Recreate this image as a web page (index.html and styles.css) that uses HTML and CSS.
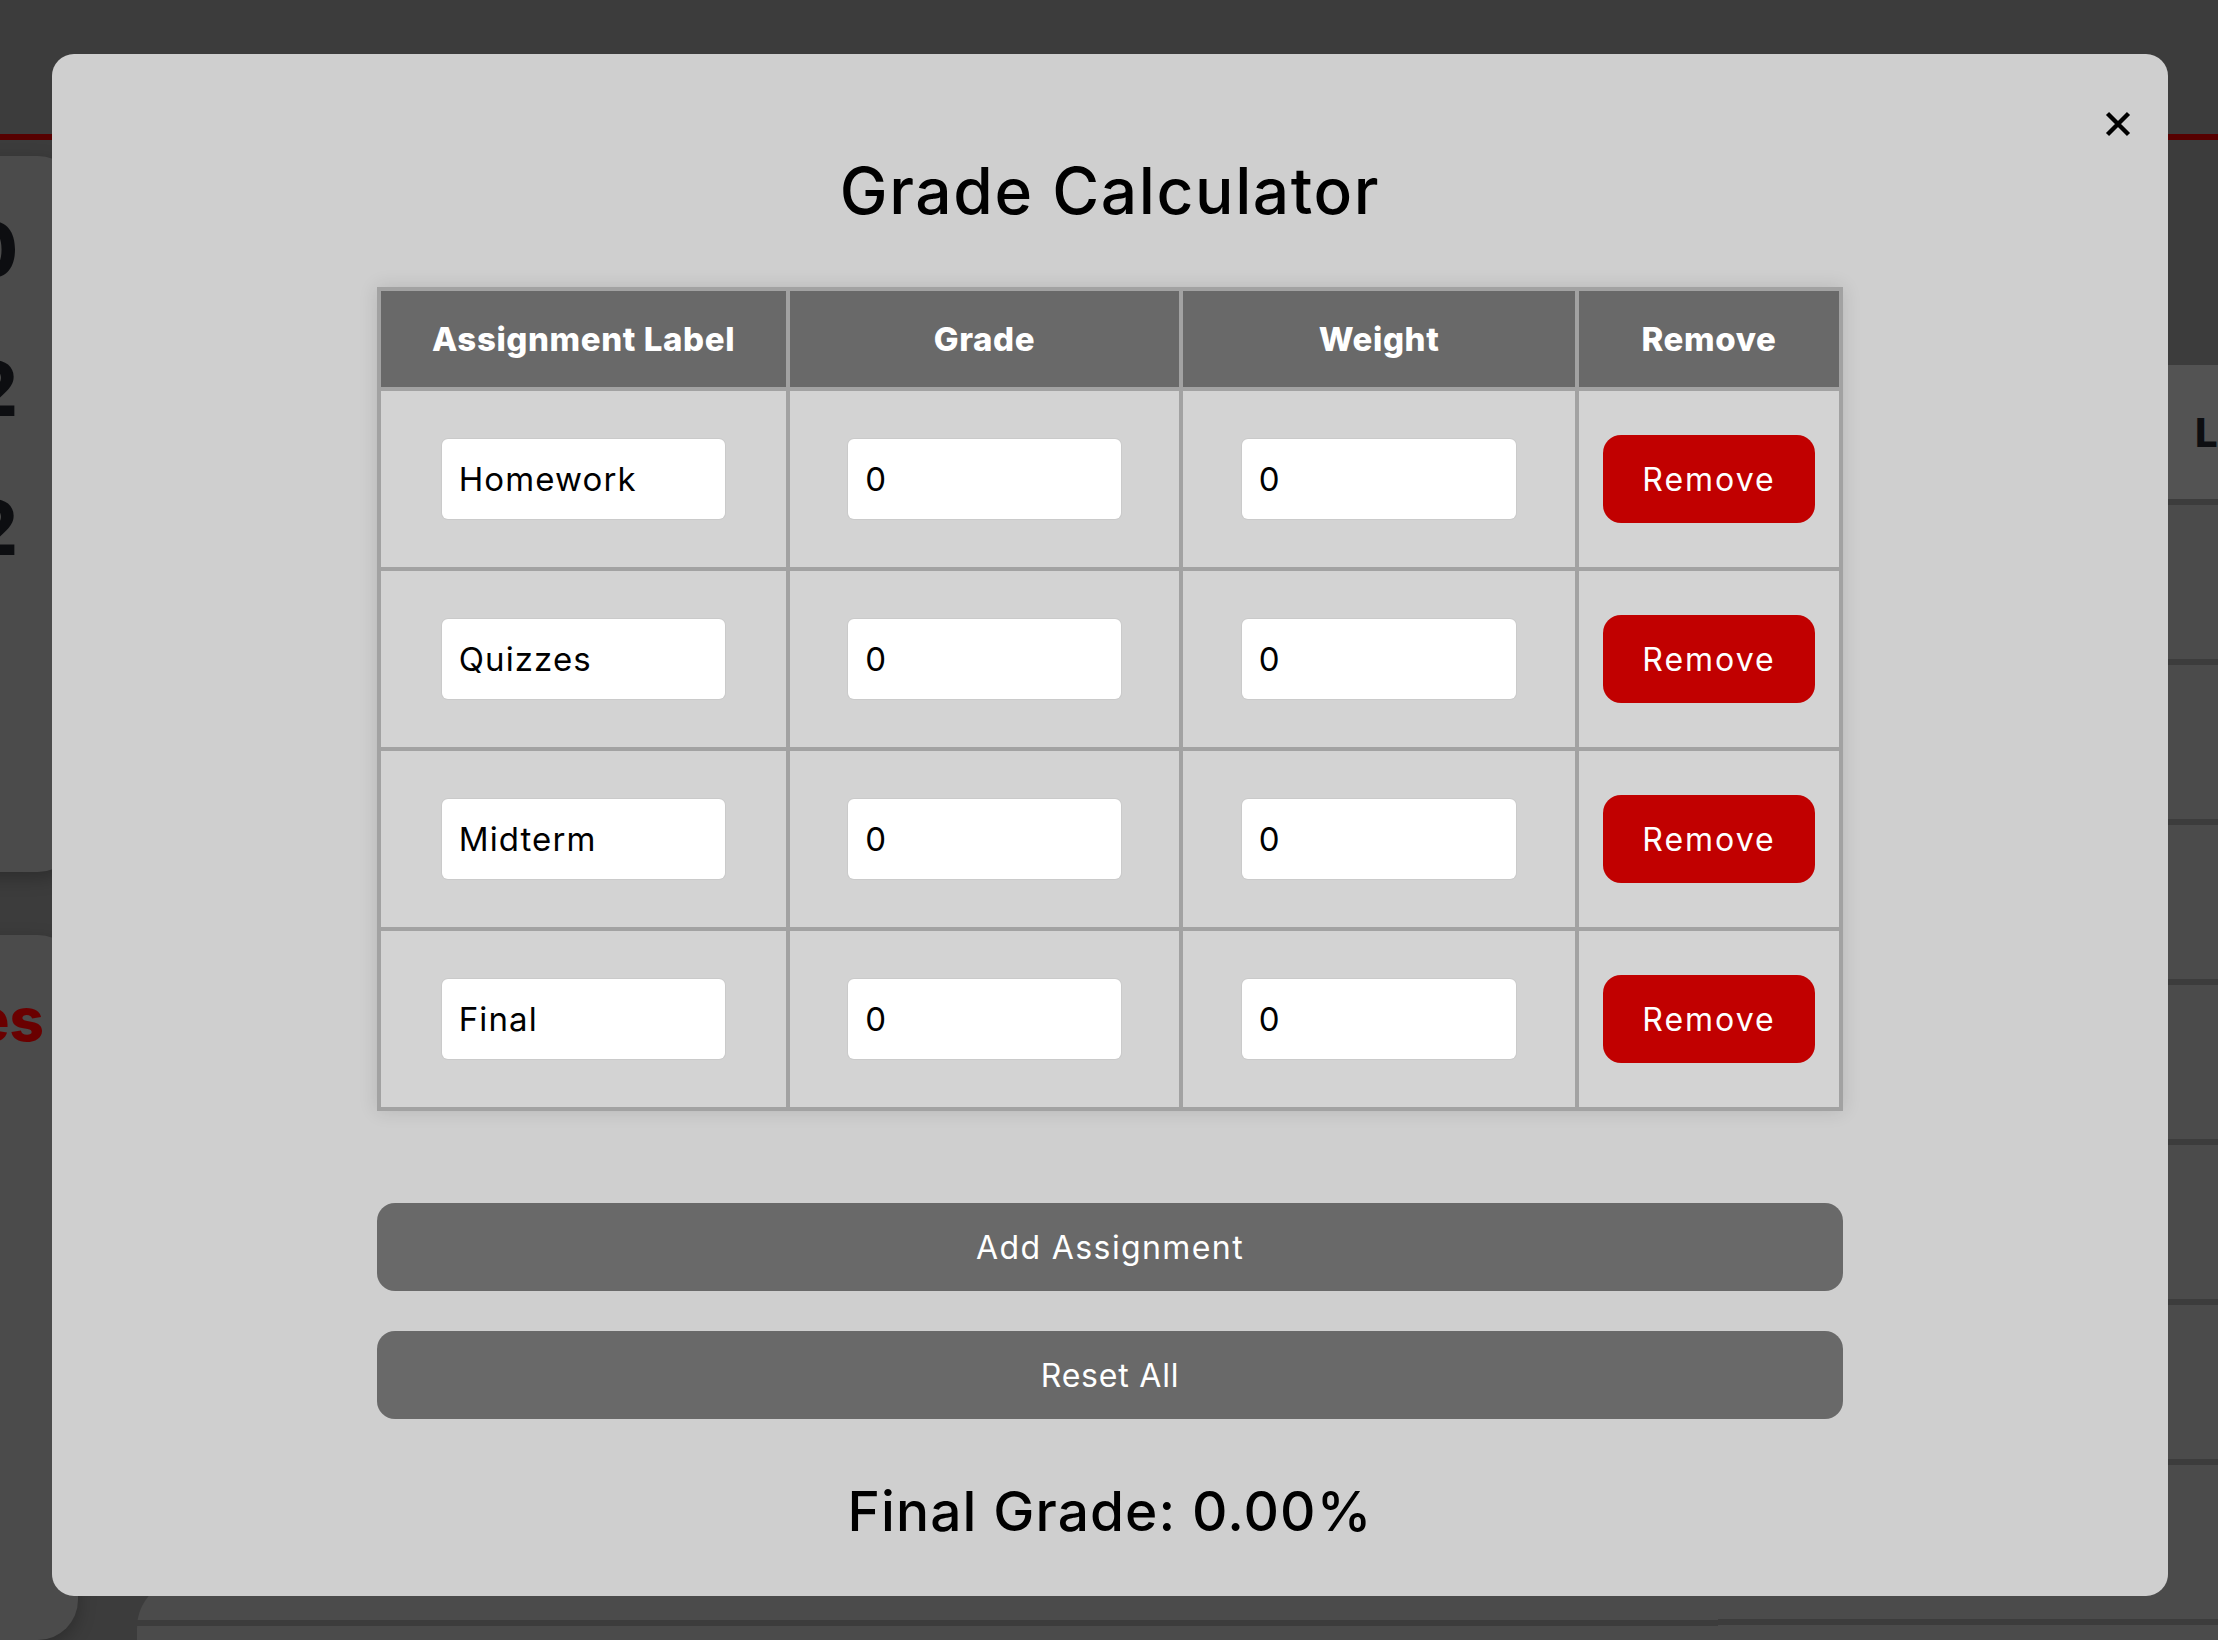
FILE: index.html
```html
<!DOCTYPE html>
<html lang="en">
<head>
<meta charset="utf-8">
<title>Grade Calculator</title>
<link rel="stylesheet" href="styles.css">
</head>
<body>
<div class="page" aria-hidden="true">
  <header class="topbar"></header>
  <div class="page-main">
    <aside class="sidebar">
      <div class="panel panel-stats">
        <div class="stat">10</div>
        <div class="stat">12</div>
        <div class="stat">22</div>
      </div>
      <div class="panel panel-links">
        <div class="panel-title">Courses</div>
      </div>
    </aside>
    <main class="content">
      <div class="content-left">
        <div class="bottom-card"><div class="bottom-card-line"></div></div>
      </div>
      <section class="grades-card">
        <div class="grades-head"><span>Letter</span></div>
        <div class="grades-row"></div>
        <div class="grades-row"></div>
        <div class="grades-row"></div>
        <div class="grades-row"></div>
        <div class="grades-row"></div>
        <div class="grades-row"></div>
        <div class="grades-row"></div>
      </section>
    </main>
  </div>
</div>

<div class="modal" role="dialog" aria-labelledby="calc-title">
  <button class="close" aria-label="Close">
    <svg width="28" height="28" viewBox="0 0 28 28"><path d="M3.5 3.5 L24.5 24.5 M24.5 3.5 L3.5 24.5" stroke="#000" stroke-width="4.4" fill="none"/></svg>
  </button>
  <h1 class="title" id="calc-title">Grade Calculator</h1>
  <table class="grades">
    <colgroup>
      <col class="c1"><col class="c2"><col class="c3"><col class="c4">
    </colgroup>
    <thead>
      <tr><th>Assignment Label</th><th>Grade</th><th>Weight</th><th>Remove</th></tr>
    </thead>
    <tbody>
      <tr>
        <td><input class="field" type="text" value="Homework"></td>
        <td><input class="field" type="text" value="0"></td>
        <td><input class="field" type="text" value="0"></td>
        <td><button class="remove">Remove</button></td>
      </tr>
      <tr>
        <td><input class="field" type="text" value="Quizzes"></td>
        <td><input class="field" type="text" value="0"></td>
        <td><input class="field" type="text" value="0"></td>
        <td><button class="remove">Remove</button></td>
      </tr>
      <tr>
        <td><input class="field" type="text" value="Midterm"></td>
        <td><input class="field" type="text" value="0"></td>
        <td><input class="field" type="text" value="0"></td>
        <td><button class="remove">Remove</button></td>
      </tr>
      <tr>
        <td><input class="field" type="text" value="Final"></td>
        <td><input class="field" type="text" value="0"></td>
        <td><input class="field" type="text" value="0"></td>
        <td><button class="remove">Remove</button></td>
      </tr>
    </tbody>
  </table>
  <button class="wide-btn add-btn">Add Assignment</button>
  <button class="wide-btn reset-btn">Reset All</button>
  <p class="final">Final Grade: 0.00%</p>
</div>
</body>
</html>
```

FILE: styles.css
```css
* { box-sizing: border-box; }

html, body {
  margin: 0;
  padding: 0;
}

body {
  width: 2218px;
  height: 1640px;
  overflow: hidden;
  background: #3c3c3c;
  font-family: Inter, "Noto Sans", "DejaVu Sans", sans-serif;
}

/* ---------- dimmed background page ---------- */
.page {
  height: 1640px;
  display: flex;
  flex-direction: column;
}

.topbar {
  flex: none;
  height: 140px;
  background: #3c3c3c;
  border-bottom: 6px solid #570000;
}

.page-main {
  flex: 1;
  display: flex;
  min-height: 0;
}

.sidebar {
  flex: none;
  width: 218px;
  margin-left: -140px;
  padding-top: 16px;
  display: flex;
  flex-direction: column;
  gap: 63px;
}

.panel {
  background: #4b4b4b;
  border-radius: 40px;
  box-shadow: 0 6px 18px rgba(0, 0, 0, 0.25);
}

.panel-stats {
  flex: none;
  height: 716px;
  padding: 24px 60px 0 0;
  display: flex;
  flex-direction: column;
  align-items: flex-end;
}

.stat {
  font-size: 76px;
  font-weight: 800;
  line-height: 139px;
  color: #0d0e11;
  white-space: nowrap;
}

.panel-links {
  flex: 1;
  padding: 54px 34px 0 0;
  display: flex;
  justify-content: flex-end;
  align-items: flex-start;
}

.panel-title {
  flex: none;
  font-size: 60px;
  font-weight: 800;
  line-height: 1;
  color: #6a0000;
  white-space: nowrap;
}

.content {
  flex: 1;
  display: flex;
  margin-left: 59px;
}

.content-left {
  flex: 1;
  display: flex;
  flex-direction: column;
  justify-content: flex-end;
}

.bottom-card {
  height: 62px;
  padding-top: 42px;
  background: #4b4b4b;
  border-radius: 50px 0 0 0;
}

.bottom-card-line {
  height: 6px;
  background: #3c3c3c;
}

.grades-card {
  flex: none;
  width: 500px;
  margin-top: 225px;
  background: #4b4b4b;
}

.grades-head {
  height: 140px;
  display: flex;
  align-items: center;
  padding-left: 477px;
  background: #535353;
  border-bottom: 6px solid #3c3c3c;
  font-size: 40px;
  font-weight: 800;
  color: #0d0e11;
  white-space: nowrap;
}

.grades-row {
  height: 160px;
  border-bottom: 6px solid #3c3c3c;
}

/* ---------- modal ---------- */
.modal {
  position: fixed;
  left: 52px;
  top: 54px;
  width: 2116px;
  height: 1542px;
  padding-top: 105px;
  background: #cfcfcf;
  border-radius: 22px;
  display: flex;
  flex-direction: column;
  align-items: center;
}

.close {
  position: absolute;
  top: 56px;
  right: 36px;
  width: 28px;
  height: 28px;
  padding: 0;
  border: none;
  background: none;
  display: flex;
}

.title {
  margin: 0;
  font-size: 64px;
  font-weight: 500;
  line-height: 64px;
  color: #000;
  letter-spacing: 1.6px;
}

.grades {
  margin-top: 64px;
  width: 1466px;
  table-layout: fixed;
  border-collapse: collapse;
  border: 4px solid #a2a2a2;
  box-shadow: 0 0 18px rgba(0, 0, 0, 0.12);
}

.c1 { width: 409px; }
.c2 { width: 393px; }
.c3 { width: 396px; }
.c4 { width: 264px; }

.grades th,
.grades td {
  border: 4px solid #a2a2a2;
  padding: 0;
  text-align: center;
  vertical-align: middle;
}

.grades th {
  height: 100px;
  background: #696969;
  color: #fff;
  font-size: 33px;
  font-weight: 800;
  letter-spacing: 0.6px;
}

.grades td {
  height: 180px;
  background: #d3d3d3;
}

.field {
  display: block;
  width: 70%;
  height: 80px;
  margin: 0 auto;
  padding: 0 17px;
  border: none;
  border-radius: 6px;
  background: #fff;
  box-shadow: 0 0 0 1px rgba(0, 0, 0, 0.04);
  font-family: inherit;
  font-size: 33px;
  letter-spacing: 1.1px;
  color: #000;
  outline: none;
}

.remove {
  width: 212px;
  height: 88px;
  border: none;
  border-radius: 18px;
  background: #c10000;
  color: #fff;
  font-family: inherit;
  font-size: 32px;
  font-weight: 400;
  letter-spacing: 2px;
}

.wide-btn {
  flex: none;
  width: 1466px;
  height: 88px;
  border: none;
  border-radius: 18px;
  background: #696969;
  color: #fff;
  font-family: inherit;
  font-size: 32px;
  font-weight: 400;
}

.add-btn { margin-top: 92px; letter-spacing: 1.4px; }
.reset-btn { margin-top: 40px; letter-spacing: 0.8px; }

.final {
  margin: 65px 0 0;
  font-size: 55px;
  font-weight: 500;
  line-height: 55px;
  letter-spacing: 1.1px;
  color: #000;
}
```
